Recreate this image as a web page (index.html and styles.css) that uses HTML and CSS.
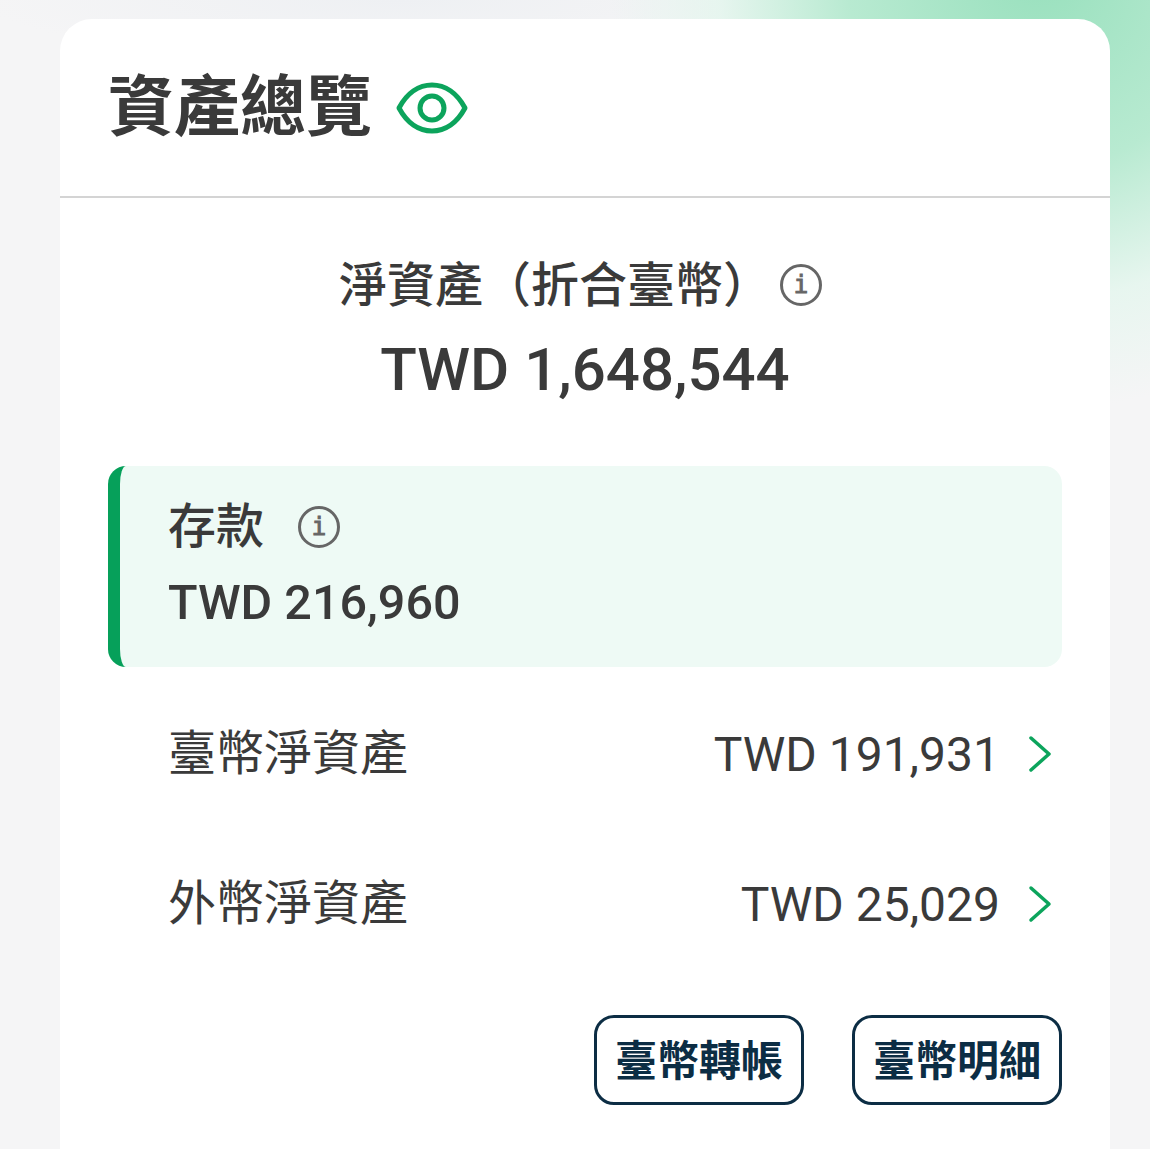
FILE: index.html
```html
<!DOCTYPE html>
<html lang="zh-Hant">
<head>
    <meta charset="UTF-8">
    <title>資產總覽</title>
    <link rel="stylesheet" href="styles.css">
</head>
<body>
    <div class="card">
        <div class="card-header">
            <h1>資產總覽</h1>
            <svg class="eye-icon" viewBox="0 0 72 52" fill="none" stroke="#0ca45c" stroke-width="5">
                <path d="M3 26C11 11 23 3 36 3s25 8 33 23c-8 15-20 23-33 23S11 41 3 26z" stroke-linejoin="round"/>
                <circle cx="36" cy="26" r="12"/>
            </svg>
        </div>

        <div class="net-worth">
            <div class="net-label">
                <span>淨資產（折合臺幣）</span>
                <svg class="info-icon" viewBox="0 0 42 42">
                    <circle cx="21" cy="21" r="19.5" fill="none" stroke="#666" stroke-width="3"/>
                    <text x="21" y="29" text-anchor="middle" class="info-letter">i</text>
                </svg>
            </div>
            <div class="net-value">TWD 1,648,544</div>
        </div>

        <div class="deposit">
            <div class="deposit-label">
                <span>存款</span>
                <svg class="info-icon" viewBox="0 0 42 42">
                    <circle cx="21" cy="21" r="19.5" fill="none" stroke="#666" stroke-width="3"/>
                    <text x="21" y="29" text-anchor="middle" class="info-letter">i</text>
                </svg>
            </div>
            <div class="deposit-value">TWD 216,960</div>
        </div>

        <div class="rows">
            <div class="row">
                <span class="row-label">臺幣淨資產</span>
                <span class="row-value">TWD 191,931</span>
                <svg class="chevron" viewBox="0 0 24 38" fill="none" stroke="#0ca45c" stroke-width="3.5" stroke-linecap="round" stroke-linejoin="round">
                    <path d="M3 3l18 16L3 35"/>
                </svg>
            </div>
            <div class="row">
                <span class="row-label">外幣淨資產</span>
                <span class="row-value">TWD 25,029</span>
                <svg class="chevron" viewBox="0 0 24 38" fill="none" stroke="#0ca45c" stroke-width="3.5" stroke-linecap="round" stroke-linejoin="round">
                    <path d="M3 3l18 16L3 35"/>
                </svg>
            </div>
        </div>

        <div class="actions">
            <button class="btn">臺幣轉帳</button>
            <button class="btn">臺幣明細</button>
        </div>
    </div>
</body>
</html>
```

FILE: styles.css
```css
* {
    box-sizing: border-box;
    margin: 0;
    padding: 0;
}

html, body {
    height: 100%;
    overflow: hidden;
}

body {
    font-family: Roboto, "Noto Sans CJK TC", sans-serif;
    color: #3a3a3a;
    padding: 19px 40px 0 60px;
    background:
        radial-gradient(ellipse 430px 440px at 1040px -30px, #98e0bd 0%, #b8ead1 45%, rgba(225, 246, 236, 0.7) 75%, rgba(245, 245, 246, 0) 100%),
        radial-gradient(ellipse 420px 60px at 400px 0, #eef0f3 0%, rgba(245, 245, 246, 0) 100%),
        #f5f5f6;
}

.card {
    background: #ffffff;
    border-radius: 32px 32px 0 0;
    height: 1130px;
    padding-bottom: 40px;
}

.card-header {
    display: flex;
    align-items: center;
    height: 179px;
    padding: 1px 0 0 48px;
    border-bottom: 2px solid #d4d4d4;
}

.card-header h1 {
    font-size: 66px;
    font-weight: 700;
    line-height: 1;
}

.eye-icon {
    width: 72px;
    height: 52px;
    margin-left: 24px;
}

.net-worth {
    text-align: center;
    padding-top: 53px;
}

.net-label {
    display: flex;
    justify-content: center;
    align-items: center;
    height: 60px;
    padding-right: 9px;
    font-size: 48px;
    font-weight: 500;
}

.net-label .info-icon {
    margin: 8px 0 0 9px;
}

.info-icon {
    width: 42px;
    height: 42px;
}

.info-letter {
    font-family: "DejaVu Sans Mono", monospace;
    font-size: 24px;
    font-weight: 400;
    fill: #666;
    stroke: #666;
    stroke-width: 1px;
}

.net-value {
    font-size: 60px;
    font-weight: 500;
    line-height: 70px;
    margin-top: 24px;
}

.deposit {
    height: 201px;
    margin: 61px 48px 0;
    padding: 23px 0 0 48px;
    background: #eefaf5;
    border-left: 12px solid #06a05a;
    border-radius: 18px;
}

.deposit-label {
    display: flex;
    align-items: center;
    gap: 34px;
    height: 66px;
    font-size: 48px;
    font-weight: 500;
}

.deposit-label .info-icon {
    margin-top: 10px;
}

.deposit-value {
    font-size: 48.5px;
    font-weight: 500;
    line-height: 60px;
    margin-top: 18px;
}

.rows {
    padding-top: 12px;
}

.row {
    display: flex;
    align-items: center;
    height: 150px;
    padding: 0 58px 0 108px;
    font-size: 48px;
}

.row-label {
    flex: 1;
    margin-bottom: 10px;
}

.row-value {
    margin-right: 28px;
}

.chevron {
    width: 24px;
    height: 38px;
}

.actions {
    display: flex;
    justify-content: flex-end;
    gap: 48px;
    padding: 0 48px;
    margin-top: 36px;
}

.btn {
    width: 210px;
    height: 90px;
    padding-bottom: 6px;
    background: #ffffff;
    border: 3px solid #0c2d44;
    border-radius: 20px;
    color: #0c2d44;
    font-family: "Noto Sans CJK TC", sans-serif;
    font-size: 42px;
    font-weight: 700;
}
```
